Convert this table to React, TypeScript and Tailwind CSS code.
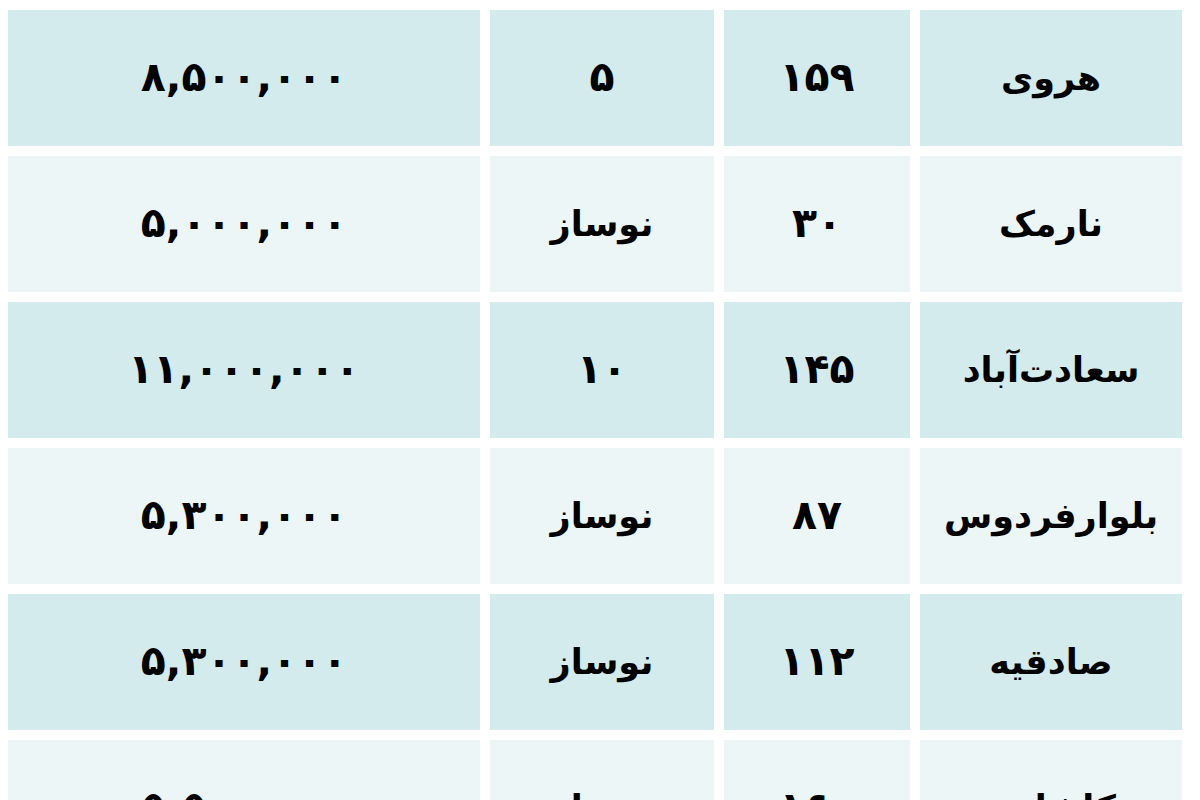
const rows = [
  { name: "هروی", area: "۱۵۹", age: "۵", price: "۸,۵۰۰,۰۰۰" },
  { name: "نارمک", area: "۳۰", age: "نوساز", price: "۵,۰۰۰,۰۰۰" },
  { name: "سعادت‌آباد", area: "۱۴۵", age: "۱۰", price: "۱۱,۰۰۰,۰۰۰" },
  { name: "بلوارفردوس", area: "۸۷", age: "نوساز", price: "۵,۳۰۰,۰۰۰" },
  { name: "صادقیه", area: "۱۱۲", age: "نوساز", price: "۵,۳۰۰,۰۰۰" },
  { name: "کاشانی", area: "۱۶۰", age: "نوساز", price: "۵,۵۰۰,۰۰۰" },
];

const isNumber = (v: string) => /^[۰-۹,]+$/.test(v);

export default function App() {
  return (
    <div
      dir="rtl"
      className="w-[1200px] h-[800px] overflow-hidden bg-white pt-[10px] pr-[18px] pl-[8px]"
      style={{ fontFamily: '"DejaVu Sans", "Noto Sans", sans-serif' }}
    >
      <div className="grid grid-cols-[262px_186px_224px_472px] auto-rows-[136px] gap-x-[10px] gap-y-[10px] font-bold text-black">
        {rows.map((r, i) => {
          const bg = i % 2 === 0 ? "bg-[#d3ebed]" : "bg-[#ecf6f7]";
          return [r.name, r.area, r.age, r.price].map((v, j) => (
            <div
              key={`${i}-${j}`}
              className={`${bg} flex items-center justify-center ${isNumber(v) ? "text-[41px]" : "text-[35px]"}`}
            >
              {v}
            </div>
          ));
        })}
      </div>
    </div>
  );
}
